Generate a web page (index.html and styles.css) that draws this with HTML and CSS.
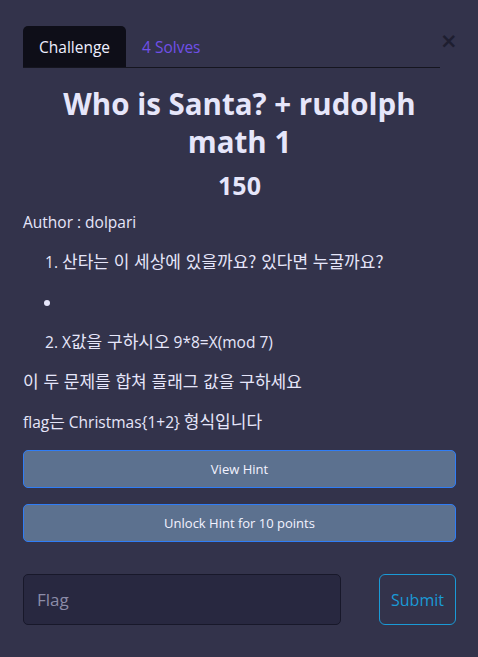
FILE: index.html
```html
<!DOCTYPE html>
<html lang="ko">
<head>
<meta charset="utf-8">
<link rel="stylesheet" href="styles.css">
</head>
<body>
<div class="modal">
  <div class="tabbar">
    <nav class="tabs">
      <span class="tab active">Challenge</span>
      <span class="tab solves">4 Solves</span>
    </nav>
    <span class="close">&times;</span>
  </div>
  <h2 class="title">Who is Santa? + rudolph math 1</h2>
  <h3 class="value">150</h3>
  <div class="desc">
    <p>Author : dolpari</p>
    <ol class="list">
      <li><p><span class="ko">산타는 이 세상에 있을까요? 있다면 누굴까요?</span></p></li>
    </ol>
    <ul class="bullets">
      <li><p></p></li>
    </ul>
    <ol class="list" start="2">
      <li><p>X<span class="ko">값을 구하시오</span> 9*8=X(mod 7)</p></li>
    </ol>
    <p><span class="ko">이 두 문제를 합쳐 플래그 값을 구하세요</span></p>
    <p>flag<span class="ko">는</span> Christmas{1+2} <span class="ko">형식입니다</span></p>
  </div>
  <div class="hints">
    <button class="hint">View Hint</button>
    <button class="hint">Unlock Hint for 10 points</button>
  </div>
  <form class="submit-row">
    <input class="flag" type="text" placeholder="Flag">
    <button class="submit" type="button">Submit</button>
  </form>
</div>
</body>
</html>
```

FILE: styles.css
```css
html, body {
  margin: 0;
  padding: 0;
  background: #33334b;
}
body {
  font-family: "Open Sans", "Noto Sans CJK KR", sans-serif;
  color: #e6e6fa;
}
.modal {
  padding: 26px 22px 0 23px;
}
.tabbar {
  display: flex;
  align-items: flex-start;
}
.tabs {
  display: flex;
  flex-shrink: 0;
  width: 417px;
  border-bottom: 1px solid #15151f;
}
.tab {
  font-size: 15.5px;
  height: 41px;
  line-height: 42px;
  padding: 0 16px;
  box-sizing: border-box;
}
.tab.active {
  background: #0e0e18;
  border-radius: 5px 5px 0 0;
  color: #eeeeff;
}
.tab.solves {
  color: #7050e8;
}
.close {
  margin-left: auto;
  margin-top: 3px;
  margin-right: 2px;
  font-size: 21px;
  line-height: 24px;
  font-weight: 700;
  color: #1e1e30;
  font-family: "DejaVu Sans", sans-serif;
}
.title {
  margin: 17px 0 0;
  padding: 0 30px;
  text-align: center;
  font-size: 29.5px;
  line-height: 38px;
  font-weight: 700;
  color: #e6e6fa;
}
.value {
  margin: 8px 0 0;
  text-align: center;
  font-size: 25px;
  line-height: 32px;
  font-weight: 700;
}
.desc {
  margin-top: 9px;
  font-size: 15.5px;
  line-height: 24px;
}
.desc p {
  margin: 0 0 16px;
}
.ko {
  font-family: "Noto Sans CJK KR", sans-serif;
  font-size: 17px;
  line-height: 1;
}
.list, .bullets {
  margin: 0;
  padding-left: 39px;
}
.bullets li p {
  height: 24px;
}
.hints {
  display: flex;
  flex-direction: column;
  gap: 16px;
}
.hint {
  height: 38px;
  background: #5c718f;
  border: 1px solid #2f7df6;
  border-radius: 5px;
  color: #f3f3ff;
  font-family: "Open Sans", sans-serif;
  font-size: 13px;
}
.submit-row {
  display: flex;
  justify-content: space-between;
  margin-top: 32px;
}
.flag {
  width: 318px;
  height: 51px;
  box-sizing: border-box;
  background: #282840;
  border: 1px solid #18182a;
  border-radius: 5px;
  padding: 0 13px;
  font-family: "Open Sans", sans-serif;
  font-size: 17px;
  color: #e6e6fa;
}
.flag::placeholder {
  color: #8c8ca8;
}
.submit {
  width: 77px;
  height: 51px;
  background: transparent;
  border: 1px solid #1a9ad6;
  border-radius: 6px;
  color: #1a9ad6;
  font-family: "Open Sans", sans-serif;
  font-size: 16px;
  padding: 0;
}
```
